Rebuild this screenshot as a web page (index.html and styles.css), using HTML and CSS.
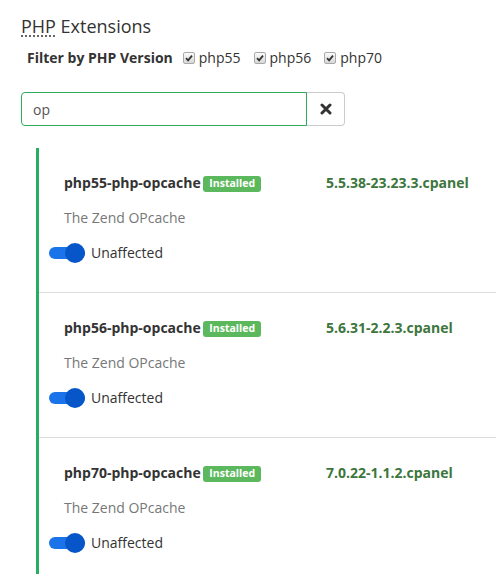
FILE: index.html
```html
<!DOCTYPE html>
<html>
<head>
<meta charset="utf-8">
<link rel="stylesheet" href="styles.css">
</head>
<body>
<div class="page">
  <h1 class="title"><abbr title="PHP: Hypertext Preprocessor">PHP</abbr> Extensions</h1>
  <div class="filter">
    <span class="filter-label">Filter by PHP Version</span>
    <label class="opt"><span class="cb"><svg width="8" height="8" viewBox="0 0 8 8"><path d="M1 4.2 L3.1 6.3 L7 1.6" fill="none" stroke="#333" stroke-width="1.8"/></svg></span>php55</label>
    <label class="opt"><span class="cb"><svg width="8" height="8" viewBox="0 0 8 8"><path d="M1 4.2 L3.1 6.3 L7 1.6" fill="none" stroke="#333" stroke-width="1.8"/></svg></span>php56</label>
    <label class="opt"><span class="cb"><svg width="8" height="8" viewBox="0 0 8 8"><path d="M1 4.2 L3.1 6.3 L7 1.6" fill="none" stroke="#333" stroke-width="1.8"/></svg></span>php70</label>
  </div>
  <div class="search">
    <input class="search-input" type="text" value="op">
    <button class="search-clear" type="button"><svg width="12" height="12" viewBox="0 0 12 12"><path d="M2 2 L10 10 M10 2 L2 10" stroke="#333" stroke-width="3" stroke-linecap="round"/></svg></button>
  </div>
  <div class="list">
    <div class="item">
      <div class="head">
        <div class="name">php55-php-opcache <span class="badge">Installed</span></div>
        <div class="version">5.5.38-23.23.3.cpanel</div>
      </div>
      <div class="desc">The Zend OPcache</div>
      <div class="status"><span class="toggle"><span class="knob"></span></span><span>Unaffected</span></div>
    </div>
    <div class="item">
      <div class="head">
        <div class="name">php56-php-opcache <span class="badge">Installed</span></div>
        <div class="version">5.6.31-2.2.3.cpanel</div>
      </div>
      <div class="desc">The Zend OPcache</div>
      <div class="status"><span class="toggle"><span class="knob"></span></span><span>Unaffected</span></div>
    </div>
    <div class="item">
      <div class="head">
        <div class="name">php70-php-opcache <span class="badge">Installed</span></div>
        <div class="version">7.0.22-1.1.2.cpanel</div>
      </div>
      <div class="desc">The Zend OPcache</div>
      <div class="status"><span class="toggle"><span class="knob"></span></span><span>Unaffected</span></div>
    </div>
  </div>
</div>
</body>
</html>
```
FILE: styles.css
```css
html, body {
  margin: 0;
  padding: 0;
  background: #fff;
}
body {
  font-family: "Open Sans", "DejaVu Sans", sans-serif;
  font-size: 14px;
  color: #333;
  overflow: hidden;
}
.page {
  padding: 14px 0 0 21px;
}
.title {
  margin: 0;
  font-size: 18px;
  line-height: 24px;
  font-weight: 400;
  color: #333;
}
.title abbr {
  text-decoration: underline dotted;
  text-decoration-color: #555;
  text-underline-offset: 3px;
}
.filter {
  display: flex;
  align-items: center;
  margin-top: 10px;
  padding-left: 6px;
  line-height: 20px;
}
.filter-label {
  font-weight: 700;
  margin-right: 10px;
}
.opt {
  display: flex;
  align-items: center;
  margin-right: 13px;
  font-size: 14px;
}
.cb {
  width: 10px;
  height: 10px;
  border: 1px solid #a9a9a9;
  border-radius: 2px;
  background: linear-gradient(#fbfbfb, #d8d8d8);
  display: flex;
  align-items: center;
  justify-content: center;
  margin-right: 4px;
}
.search {
  display: flex;
  margin-top: 24px;
}
.search-input {
  box-sizing: border-box;
  width: 286px;
  height: 34px;
  border: 1px solid #2eaa5c;
  border-radius: 4px 0 0 4px;
  padding: 0 11px;
  font-family: "Open Sans", sans-serif;
  font-size: 14px;
  color: #555;
  outline: none;
  margin: 0;
}
.search-clear {
  box-sizing: border-box;
  width: 38px;
  height: 34px;
  border: 1px solid #ccc;
  border-left: none;
  border-radius: 0 4px 4px 0;
  background: #fff;
  display: flex;
  align-items: center;
  justify-content: center;
  padding: 0;
  margin: 0;
}
.list {
  margin-top: 22px;
  margin-left: 15px;
  border-left: 3px solid #27ae60;
}
.item {
  padding: 25px 0 29px 25px;
  border-bottom: 1px solid #ddd;
}
.head {
  display: grid;
  grid-template-columns: 262px auto;
  line-height: 20px;
}
.name {
  font-weight: 700;
  color: #333;
}
.badge {
  display: inline-block;
  background: #5cb85c;
  color: #fff;
  font-size: 10.5px;
  font-weight: 700;
  line-height: 1;
  padding: 2px 6px 3px;
  border-radius: 3px;
  vertical-align: 1px;
  margin-left: -1px;
}
.version {
  font-weight: 700;
  color: #3c763d;
}
.desc {
  margin-top: 15px;
  line-height: 20px;
  color: #777;
}
.status {
  margin-top: 15px;
  margin-left: -15px;
  height: 20px;
  display: flex;
  align-items: center;
  gap: 6px;
  line-height: 20px;
}
.toggle {
  width: 36px;
  height: 12px;
  border-radius: 6px;
  background: #1a73e8;
  display: flex;
  align-items: center;
  justify-content: flex-end;
}
.knob {
  width: 20px;
  height: 20px;
  border-radius: 50%;
  background: #0656c9;
  flex-shrink: 0;
}
```
